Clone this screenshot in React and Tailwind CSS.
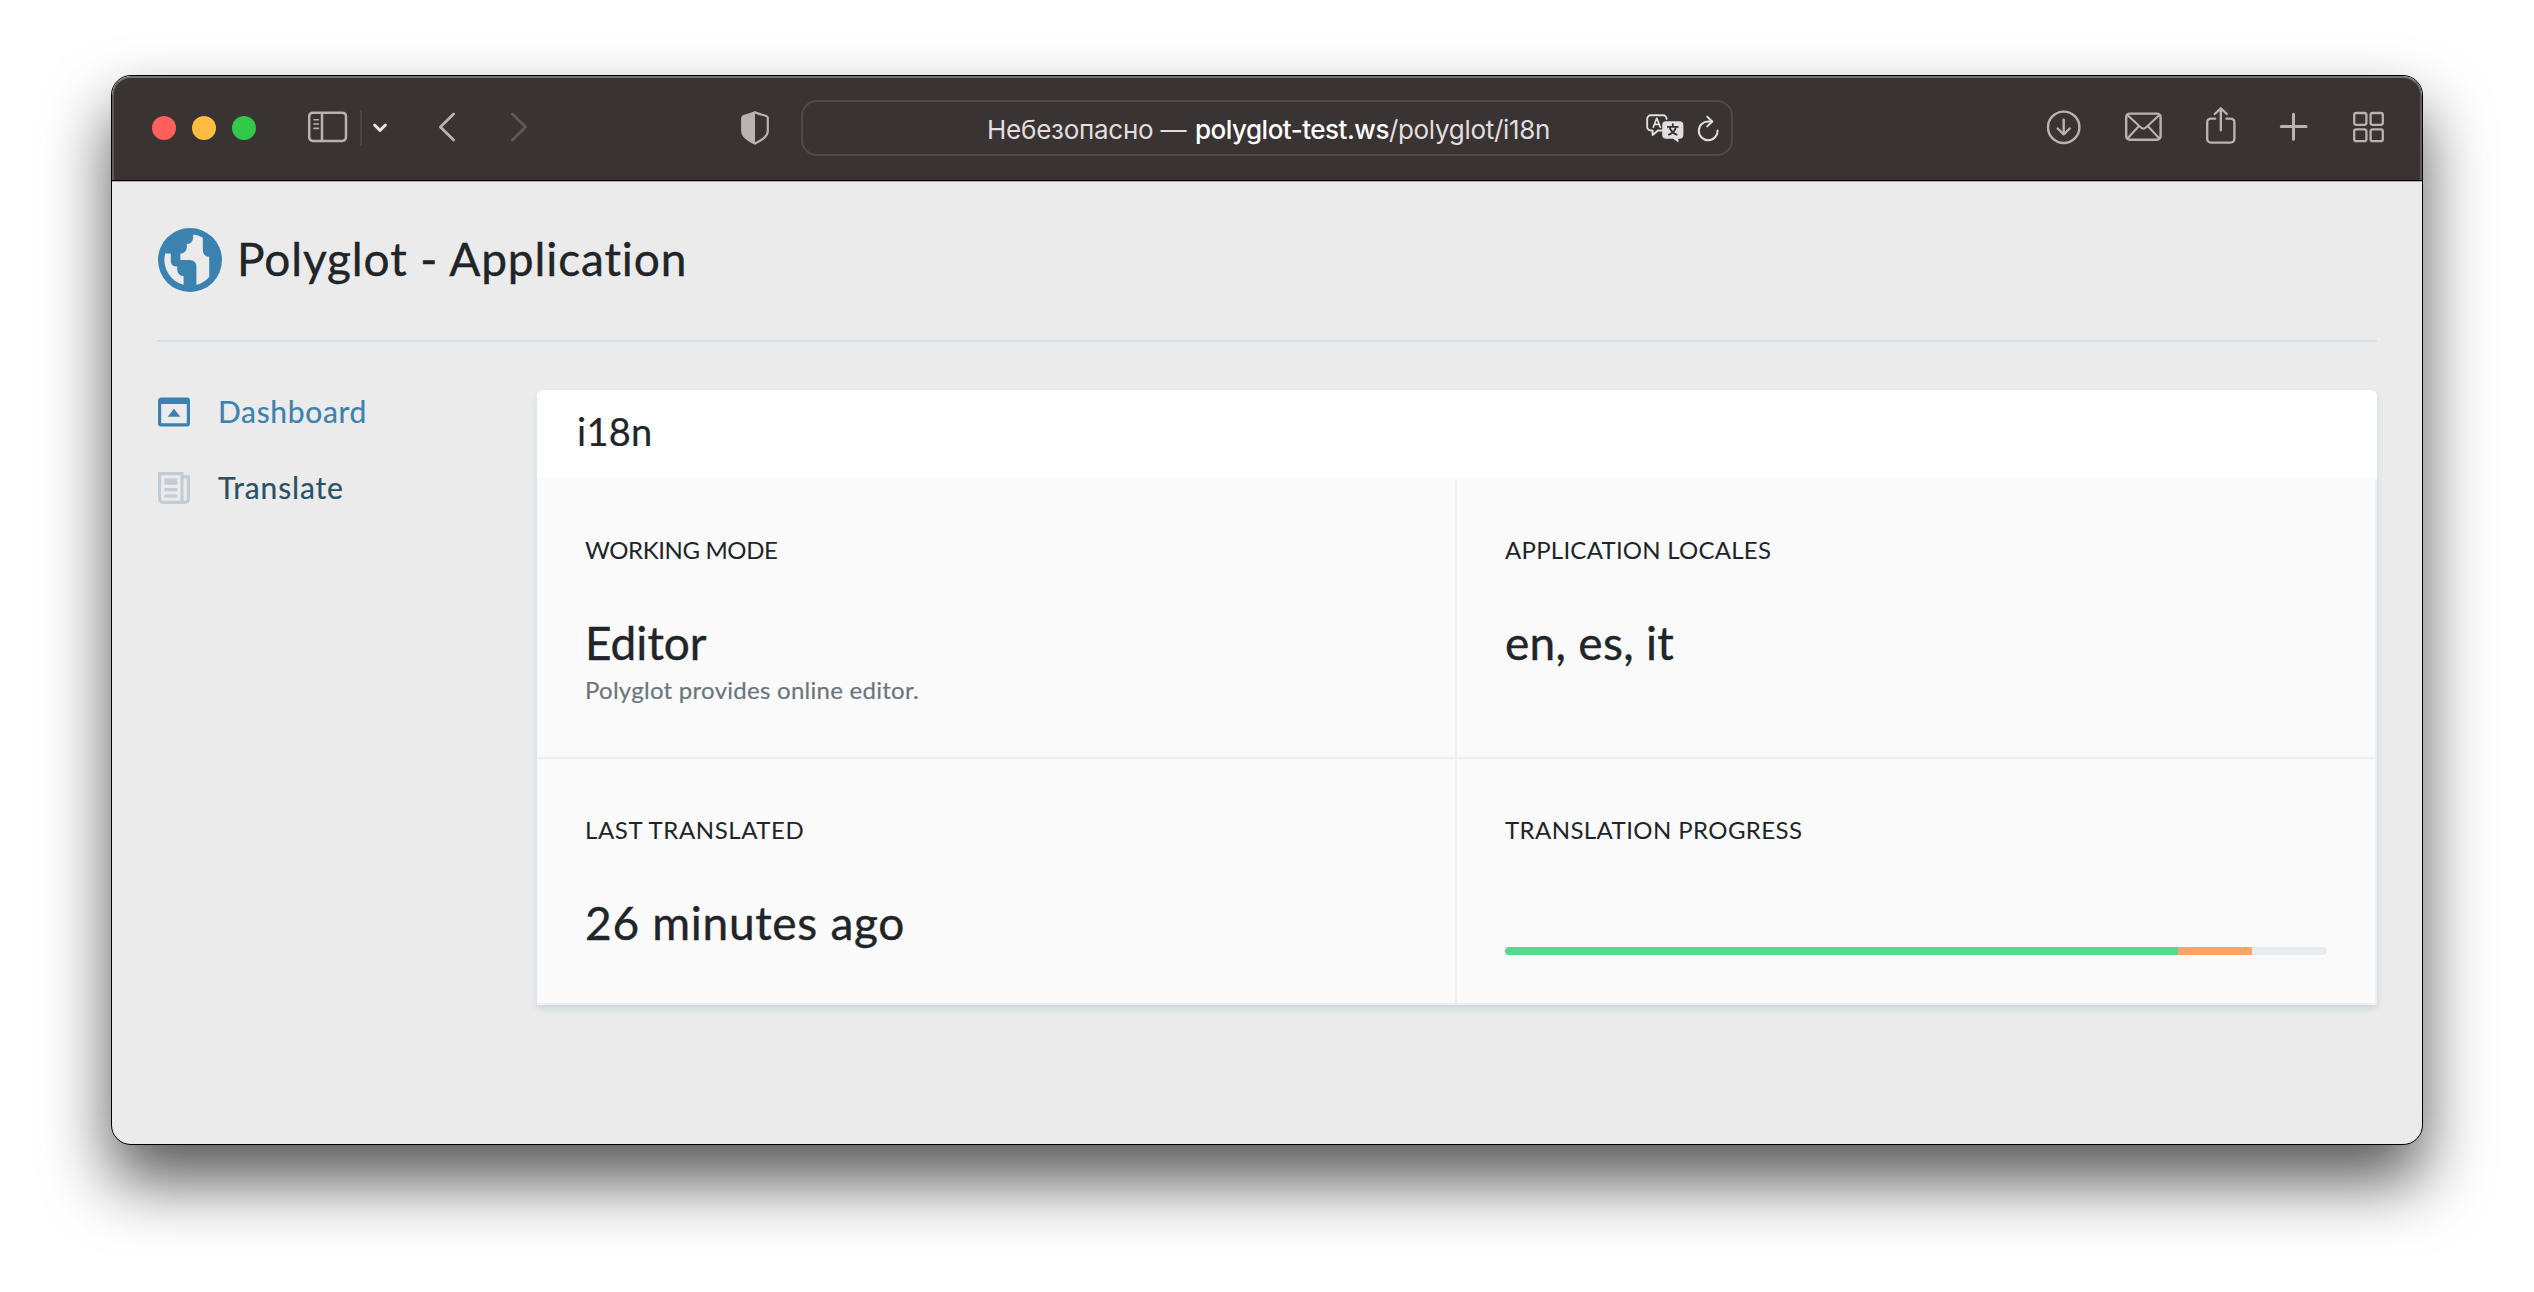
import React from "react";

const stroke = { fill: "none", stroke: "currentColor", strokeLinecap: "round", strokeLinejoin: "round" };

function SidebarIcon() {
  return (
    <svg className="ml-[52px] h-[44px] w-[40px]" viewBox="0 0 40 44" {...stroke} strokeWidth="2.5">
      <rect x="1.2" y="6.7" width="36.8" height="28.2" rx="3.6" />
      <path d="M14 7v28" />
      <path d="M6 13.8h4.4M6 18h4.4M6 22.4h4.4" strokeWidth="1.6" />
    </svg>
  );
}

function ShieldIcon() {
  return (
    <svg className="ml-[211px] h-[44px] w-[30px]" viewBox="0 0 30 44">
      <path d="M15 6.2C18.5 8 22.5 8.8 26.3 10c1.1.4 1.5 1 1.5 2.2v12.6c0 6-5.8 9-12.8 12.8C8 33.8 2.2 30.8 2.2 24.8V12.2c0-1.2.4-1.8 1.5-2.2C7.5 8.8 11.5 8 15 6.2z" fill="none" stroke="currentColor" strokeWidth="2.2" strokeLinejoin="round" />
      <path d="M15 6v31.5C8 33.8 2.2 30.8 2.2 24.8V12.2c0-1.2.4-1.8 1.5-2.2C7.5 8.8 11.500 8 15 6z" fill="currentColor" />
    </svg>
  );
}

function TranslatePageIcon() {
  return (
    <svg className="h-[44px] w-[38px]" viewBox="0 0 38 44">
      <path
        d="M16.5 24.5h-4.5L6.600 29v-4.500H4.800A3.600 3.600 0 0 1 1.200 20.900v-8A3.600 3.600 0 0 1 4.800 9.300H17A3.600 3.600 0 0 1 20.600 12.900"
        {...stroke}
        strokeWidth="1.9"
      />
      <path d="M7.3 21.2l3.4-8.9h.2l3.4 8.9M8.400 18.400h4.800" {...stroke} strokeWidth="1.7" />
      <path d="M20.2 15.200h13.200a4 4 0 0 1 4 4v9.600a4 4 0 0 1-4 4h-1v3.800l-5.200-3.800h-7a4 4 0 0 1-4-4v-9.600a4 4 0 0 1 4-4z" fill="currentColor" />
      <path d="M26.8 18.200v2.400M21.800 20.900h10M23.700 21.200c.8 3.500 3.200 6 7 7.400M29.900 21.200c-.8 3.500-3.200 6-7 7.400" {...stroke} stroke="#3a3333" strokeWidth="1.8" />
    </svg>
  );
}

function WindowControls() {
  return (
    <div className="flex gap-4">
      <span className="size-6 rounded-full bg-[#ff605c]" />
      <span className="size-6 rounded-full bg-[#fdbc40]" />
      <span className="size-6 rounded-full bg-[#34c84a]" />
    </div>
  );
}

function AddressBar() {
  return (
    <div className="ml-[31px] flex h-[56px] w-[932px] items-center rounded-[16px] border-2 border-[#4f4a4a] pl-[184px] text-[#e0dede]">
      <div className="flex w-[659px] pt-[3px] font-[Inter,sans-serif] text-[26px] leading-[36px] whitespace-pre">
        <span className="w-[208px] tracking-[-0.25px]">Небезопасно —</span>
        <span className="font-medium tracking-[-0.5px] text-white">polyglot-test.ws</span>
        <span className="tracking-[-0.3px]">/polyglot/i18n</span>
      </div>
      <TranslatePageIcon />
      <svg className="ml-[13px] h-[44px] w-[23px]" viewBox="0 0 23 44" {...stroke} strokeWidth="2">
        <path d="M20.6 24.500A9.400 9.400 0 1 1 11.400 15.400L15.200 15.500" />
        <path d="M10.2 10.600l5 4.900-5 4.900" />
      </svg>
    </div>
  );
}

function Toolbar() {
  return (
    <header className="flex h-[104px] items-center rounded-t-[19px] border-x-2 border-t-2 border-x-[#625d5c] border-t-[#77736f] bg-[#3a3333] pr-[35px] pb-[2px] pl-[38px] text-[#b8b2b2]">
      <WindowControls />
      <SidebarIcon />
      <span className="ml-[12px] h-[36px] w-[2px] bg-[#4b4545]" />
      <svg className="ml-[10px] h-[44px] w-[16px] text-[#e6e2e2]" viewBox="0 0 16 44" {...stroke} strokeWidth="3">
        <path d="M2.6 19l5.400 5.400L13.400 19" />
      </svg>
      <svg className="ml-[49px] h-[44px] w-[20px]" viewBox="0 0 20 44" {...stroke} strokeWidth="2.8">
        <path d="M16.6 8L3.400 21l13.200 13" />
      </svg>
      <svg className="ml-[52px] h-[44px] w-[20px] text-[#5f5959]" viewBox="0 0 20 44" {...stroke} strokeWidth="2.8">
        <path d="M3.4 8l13.200 13L3.400 34" />
      </svg>
      <ShieldIcon />
      <AddressBar />
      <svg className="ml-auto h-[44px] w-[36px]" viewBox="0 0 36 44" {...stroke} strokeWidth="2.4">
        <circle cx="17.7" cy="21.3" r="15.7" />
        <path d="M17.7 13.800v14.400M11.700 22.500l6 6 6-6" />
      </svg>
      <svg className="ml-[42px] h-[44px] w-[39px]" viewBox="0 0 39 44" {...stroke} strokeWidth="2.4">
        <rect x="2.2" y="7.6" width="34.4" height="26.2" rx="3.6" />
        <path d="M3.4 9l13.200 12.200c1.800 1.700 3.800 1.700 5.600 0L35.400 9M3.400 32.500l11.400-12.200M35.400 32.500L24 20.300" strokeWidth="2.1" />
      </svg>
      <svg className="ml-[42px] h-[44px] w-[32px]" viewBox="0 0 32 44" {...stroke} strokeWidth="2.4">
        <path d="M10.2 12.600H6a3.800 3.800 0 0 0-3.800 3.800v16.400a3.800 3.800 0 0 0 3.800 3.800h19.600a3.800 3.800 0 0 0 3.800-3.800V16.400a3.800 3.800 0 0 0-3.800-3.800h-4.200" />
        <path d="M15.8 24.300V2.600M9.800 8l6-5.700 6 5.700" />
      </svg>
      <svg className="ml-[42px] h-[44px] w-[29px]" viewBox="0 0 29 44" {...stroke} strokeWidth="3">
        <path d="M14.5 8.200v25M2.300 20.600h24.800" />
      </svg>
      <svg className="ml-[44px] h-[44px] w-[33px]" viewBox="0 0 33 44" {...stroke} strokeWidth="2.3">
        <rect x="2.2" y="7" width="12.2" height="11.8" rx="2" />
        <rect x="18.6" y="7" width="12.2" height="11.8" rx="2" />
        <rect x="2.2" y="23.4" width="12.2" height="11.8" rx="2" />
        <rect x="18.6" y="23.4" width="12.2" height="11.8" rx="2" />
      </svg>
    </header>
  );
}

function Brand() {
  return (
    <div className="flex h-[160px] items-center border-b-2 border-[#d3dfea] pb-[2px]">
      <svg className="ml-px size-16 text-[#3b82b0]" viewBox="0 0 20 20" fill="currentColor">
        <path d="M10 20a10 10 0 1 1 0-20 10 10 0 0 1 0 20zm2-2.25a8 8 0 0 0 4-2.46V9a2 2 0 0 1-2-2V3.07a7.95 7.95 0 0 0-3-1V3a2 2 0 0 1-2 2v1a2 2 0 0 1-2 2v2h3a2 2 0 0 1 2 2v5.75zm-4 0V15a2 2 0 0 1-2-2v-1h-.5A1.5 1.5 0 0 1 4 10.5V8H2.25A8.01 8.01 0 0 0 8 17.75z" />
      </svg>
      <h1 className="ml-[15px] pb-[3px] text-[46px] leading-[56px] tracking-[0.88px] text-[#212529] [-webkit-text-stroke:0.4px]">Polyglot - Application</h1>
    </div>
  );
}

function Sidebar() {
  return (
    <nav className="flex w-[380px] flex-col gap-10 pt-[4px] text-[30px] leading-9">
      <a className="flex h-9 items-center text-[#3b82b0]">
        <svg className="ml-px size-8" viewBox="0 0 20 20" fill="currentColor">
          <path d="M0 3c0-1.1.9-2 2-2h16a2 2 0 0 1 2 2v14a2 2 0 0 1-2 2H2a2 2 0 0 1-2-2V3zm2 2v12h16V5H2zm8 3l4 5H6l4-5z" />
        </svg>
        <span className="-mt-[2px] ml-7 tracking-[0.67px] [-webkit-text-stroke:0.2px]">Dashboard</span>
      </a>
      <a className="flex h-9 items-center text-[#2a5164]">
        <svg className="ml-px size-8 text-[#c3cbd3]" viewBox="0 0 20 20" fill="currentColor">
          <path d="M16 2h4v15a3 3 0 0 1-3 3H3a3 3 0 0 1-3-3V0h16v2zm0 2v13a1 1 0 0 0 1 1 1 1 0 0 0 1-1V4h-2zM2 2v15a1 1 0 0 0 1 1h11.17a2.98 2.98 0 0 1-.17-1V2H2zm2 8h8v2H4v-2zm0 4h8v2H4v-2zM4 4h8v4H4V4z" />
        </svg>
        <span className="-mt-[2px] ml-7 tracking-[0.85px] [-webkit-text-stroke:0.2px]">Translate</span>
      </a>
    </nav>
  );
}

function Cell({ label, labelClass, children, className }) {
  return (
    <section className={`border-r-2 border-b-2 border-[#eeefef] px-12 pt-[53px] ${className}`}>
      <h3 className={`text-2xl leading-9 whitespace-nowrap ${labelClass}`}>{label}</h3>
      {children}
    </section>
  );
}

function Card() {
  return (
    <main className="flex-1 rounded-t-[6px] bg-white text-[#212529] shadow-[0_4px_6px_#cdd8df]">
      <h2 className="flex h-[89px] items-center pb-[6px] pl-[40px] text-[38px] tracking-[0.27px] [-webkit-text-stroke:0.2px]">i18n</h2>
      <div className="grid grid-cols-2 bg-[#fafafa]">
        <Cell label="WORKING MODE" labelClass="tracking-[-0.38px]" className="h-[280px]">
          <p className="mt-[47px] text-[46px] leading-[56px] [-webkit-text-stroke:0.4px]">Editor</p>
          <p className="mt-px text-2xl leading-9 tracking-[0.27px] text-[#6c757d] [-webkit-text-stroke:0.2px]">Polyglot provides online editor.</p>
        </Cell>
        <Cell label="APPLICATION LOCALES" labelClass="tracking-[0.25px]" className="h-[280px]">
          <p className="mt-[47px] text-[46px] leading-[56px] tracking-[0.3px] [-webkit-text-stroke:0.4px]">en, es, it</p>
        </Cell>
        <Cell label="LAST TRANSLATED" labelClass="tracking-[0.6px]" className="h-[246px]">
          <p className="mt-[47px] text-[46px] leading-[56px] tracking-[0.7px] [-webkit-text-stroke:0.4px]">26 minutes ago</p>
        </Cell>
        <Cell label="TRANSLATION PROGRESS" labelClass="tracking-[0.41px]" className="h-[246px]">
          <div className="mt-[99px] flex h-2 overflow-hidden rounded-full bg-[#e9ecef]">
            <span className="w-[673px] bg-[#57d88c]" />
            <span className="w-[74px] bg-[#ffa366]" />
          </div>
        </Cell>
      </div>
    </main>
  );
}

export default function App() {
  return (
    <div className="h-[1292px] w-[2534px] overflow-hidden bg-white pt-[75px] pl-[111px]">
      <div className="flex h-[1070px] w-[2312px] flex-col overflow-hidden rounded-[20px] border border-black bg-[#ebebeb] shadow-[0_36px_66px_rgba(0,0,0,0.66)]">
        <Toolbar />
        <div className="flex-1 border-t border-black">
          <div className="border-t border-[#aaaaaa] px-[45px] font-[Lato,sans-serif]">
            <Brand />
            <div className="flex pt-[48px]">
              <Sidebar />
              <Card />
            </div>
          </div>
        </div>
      </div>
    </div>
  );
}
